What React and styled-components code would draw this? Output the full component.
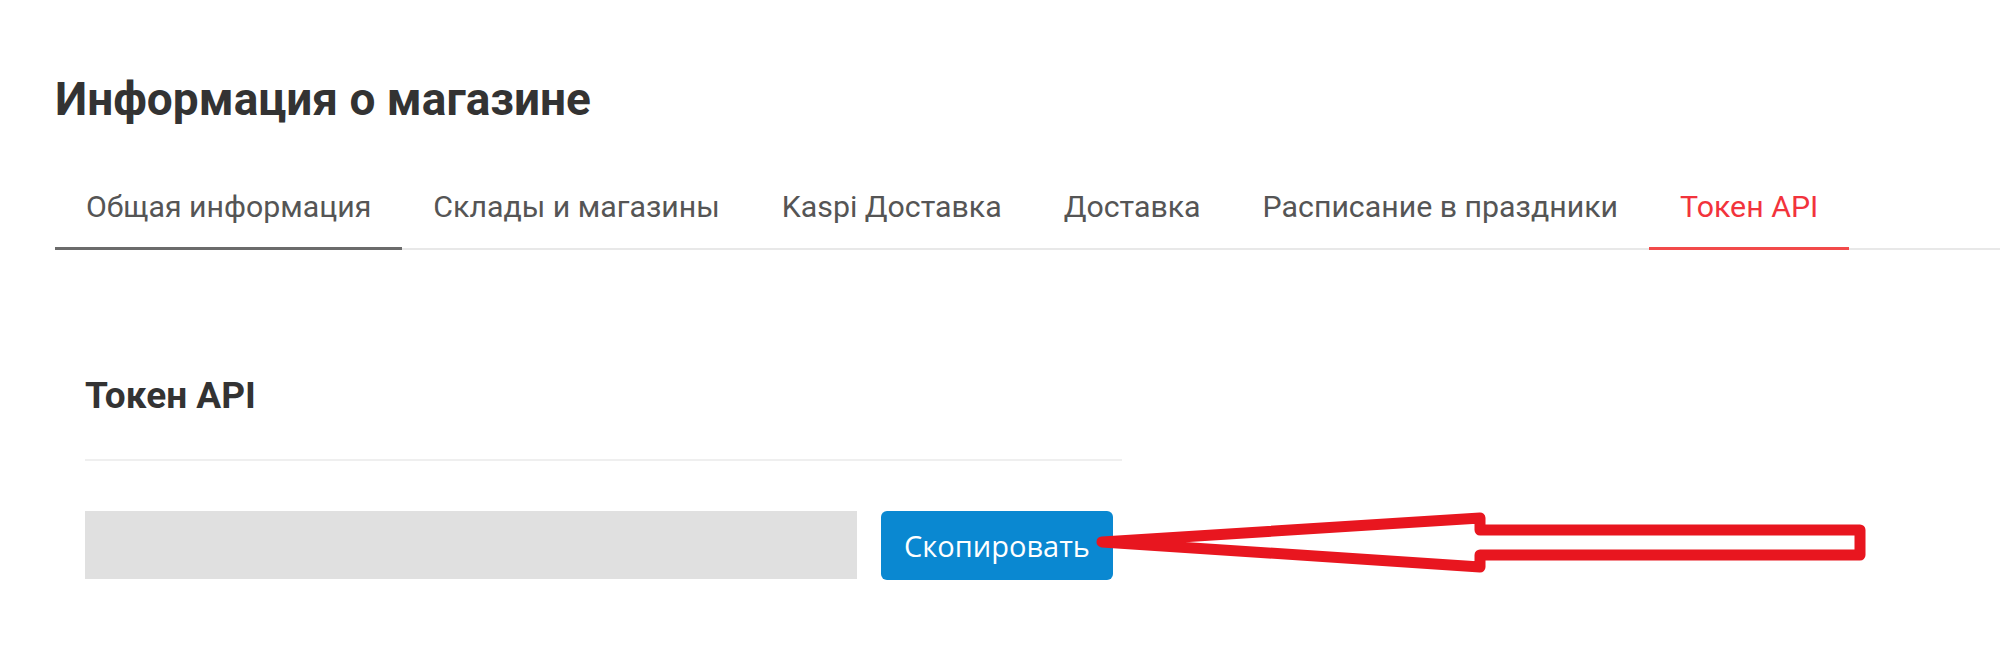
import React from "react";
import styled, { createGlobalStyle } from "styled-components";

const GlobalStyle = createGlobalStyle`
  body {
    margin: 0;
    background: #fff;
    font-family: Roboto, "Liberation Sans", sans-serif;
  }
`;

const Page = styled.div`
  position: relative;
  padding: 71px 0 0 55px;
  height: 586px;
  overflow: hidden;
`;

const Title = styled.h1`
  margin: 0;
  font-size: 46px;
  line-height: 56px;
  font-weight: 700;
  color: #333;
`;

const TabBar = styled.div`
  display: flex;
  margin-top: 60px;
  border-bottom: 2px solid #e8e8e8;
`;

const Tab = styled.div`
  padding: 0 31px 20px;
  margin-bottom: -2px;
  font-size: 30.3px;
  line-height: 40px;
  color: ${(p) => (p.active ? "#f2333c" : "#555")};
  border-bottom: 3px solid
    ${(p) => (p.active ? "#f24a4a" : p.first ? "#6b6b6b" : "transparent")};
  white-space: nowrap;
`;

const Section = styled.div`
  width: 1037px;
  margin: 124px 0 0 30px;
`;

const SectionTitle = styled.h2`
  margin: 0;
  font-size: 37px;
  line-height: 44px;
  font-weight: 700;
  color: #333;
`;

const Divider = styled.div`
  height: 2px;
  margin-top: 41px;
  background: #efefef;
`;

const Row = styled.div`
  display: flex;
  gap: 24px;
  margin-top: 50px;
`;

const TokenField = styled.div`
  width: 772px;
  height: 68px;
  background: #e0e0e0;
`;

const CopyButton = styled.button`
  width: 232px;
  height: 69px;
  border: none;
  border-radius: 6px;
  background: #0a88d1;
  color: #fff;
  font-family: "Open Sans", Roboto, sans-serif;
  font-size: 29px;
  cursor: pointer;
`;

const Arrow = styled.svg`
  position: absolute;
  left: 0;
  top: 0;
  pointer-events: none;
`;

const tabs = [
  "Общая информация",
  "Склады и магазины",
  "Kaspi Доставка",
  "Доставка",
  "Расписание в праздники",
  "Токен API",
];

const App = () => {
  return (
    <Page>
      <GlobalStyle />
      <Title>Информация о магазине</Title>
      <TabBar>
        {tabs.map((t, i) => (
          <Tab key={t} first={i === 0} active={i === tabs.length - 1}>
            {t}
          </Tab>
        ))}
      </TabBar>
      <Section>
        <SectionTitle>Токен API</SectionTitle>
        <Divider />
        <Row>
          <TokenField />
          <CopyButton>Скопировать</CopyButton>
        </Row>
      </Section>
      <Arrow width="2000" height="657" viewBox="0 0 2000 657">
        <polygon
          points="1102,542 1480,518 1480,530 1860,530 1860,555 1480,555 1480,567"
          fill="none"
          stroke="#e8161f"
          strokeWidth="11"
          strokeLinejoin="round"
        />
      </Arrow>
    </Page>
  );
};

export default App;
